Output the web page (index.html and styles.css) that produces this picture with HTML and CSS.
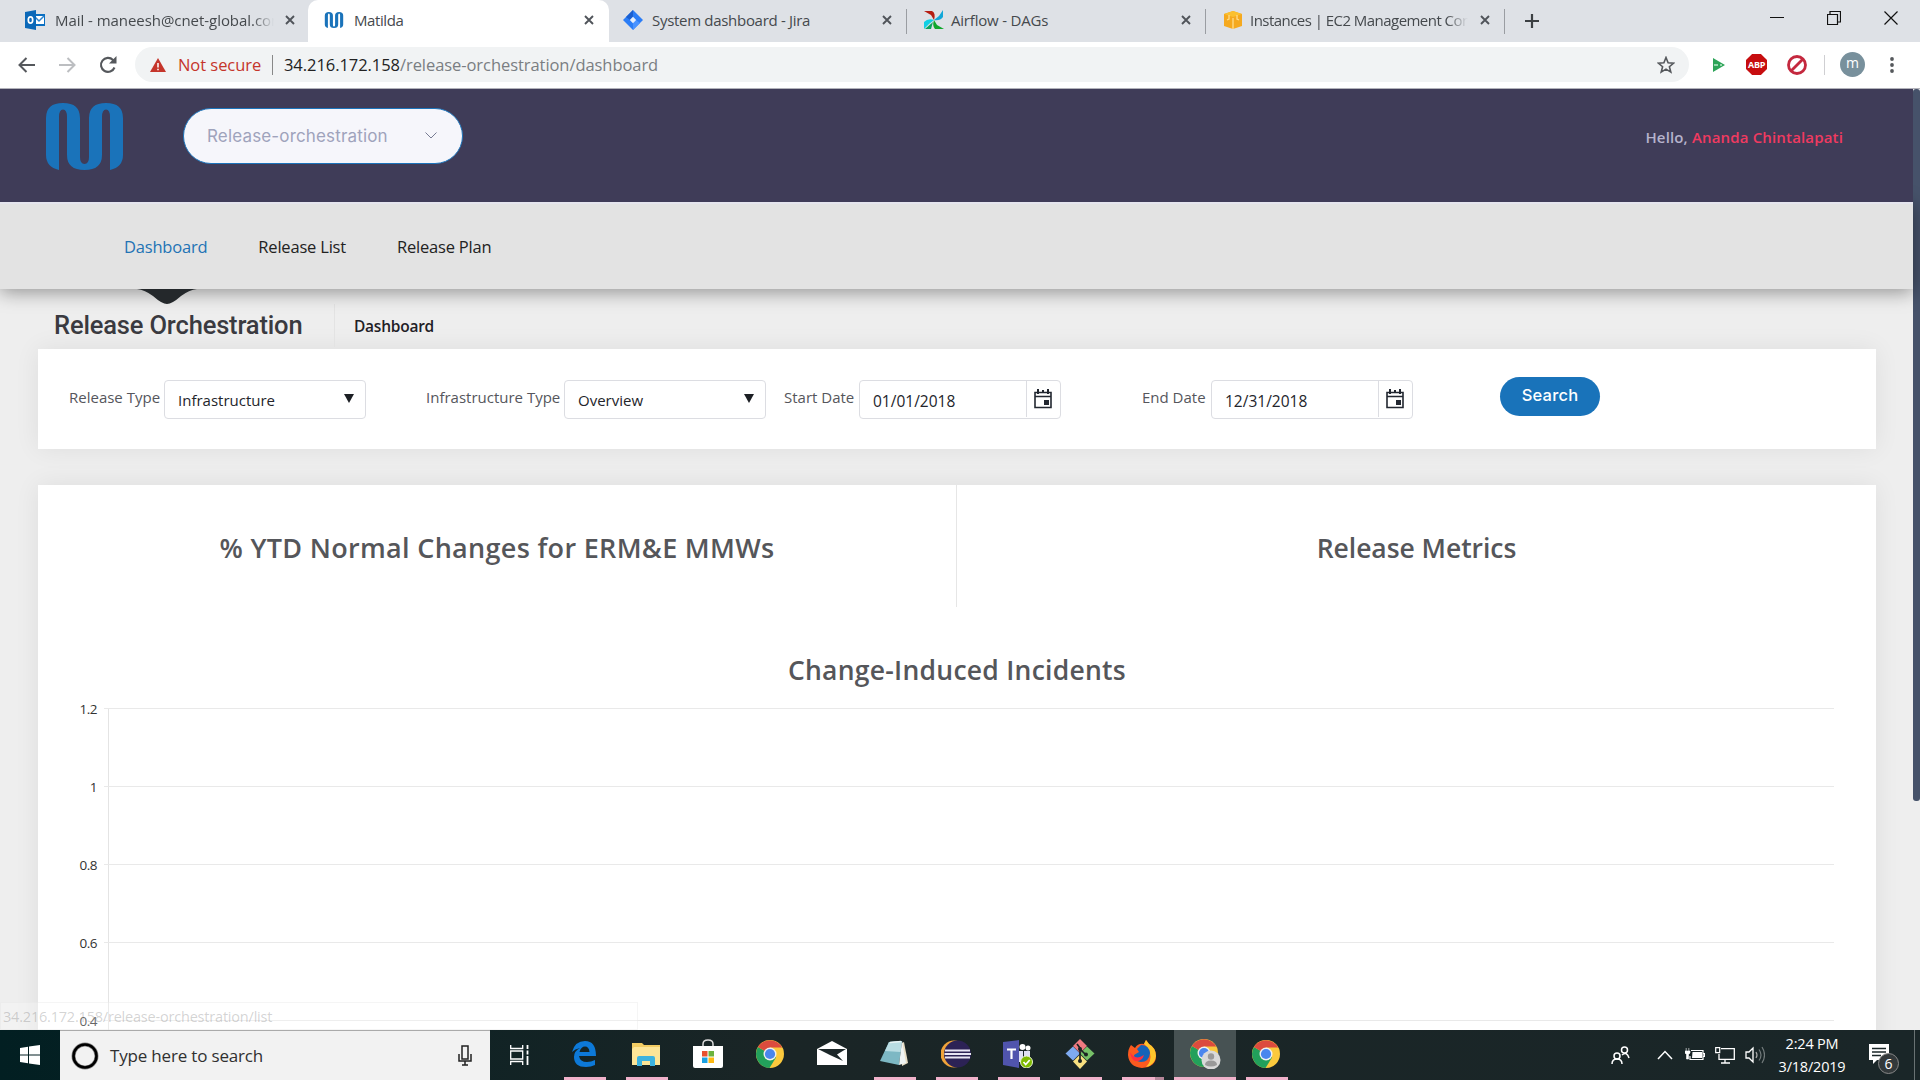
FILE: index.html
```html
<!DOCTYPE html>
<html lang="en">
<head>
<meta charset="utf-8">
<title>Matilda</title>
<link rel="stylesheet" href="styles.css">
</head>
<body>
<svg class="defs" width="0" height="0">
  <symbol id="x" viewBox="0 0 10 10"><path d="M1 1l8 8M9 1l-8 8" stroke="#50545a" stroke-width="1.9" fill="none"/></symbol>
  <symbol id="m-logo" viewBox="0 0 77 67"><path d="M13 67V14Q13 6.500 17 6.500T21 14V52Q21 67 38.500 67T56 52V14Q56 6.500 60 6.500T64 14V67Q77 64 77 52V15Q77 0 60 0T43 15V54Q43 61 38.500 61T34 54V15Q34 0 17 0T0 15V52Q0 64 13 67Z" fill="#1a73ba"/></symbol>
  <symbol id="cal" viewBox="0 0 18 20"><path d="M1 3.500h16v15H1zM1 7.500h16" fill="none" stroke="#222730" stroke-width="1.600"/><path d="M4 0v5M14 0v5M9 3V1" stroke="#222730" stroke-width="2"/><path d="M10 11h5v5h-5z" fill="#222730"/></symbol>
  <symbol id="chrome" viewBox="0 0 28 28"><circle cx="14" cy="14" r="14" fill="#fbc93d"/><path d="M14 14L1.900 7A14 14 0 0 0 13.500 28L20 17.500z" fill="#22a05b"/><path d="M14 14L1.900 7A14 14 0 0 1 26.100 7.500H14z" fill="#dc4b3e"/><circle cx="14" cy="14" r="6.500" fill="#f1f1f1"/><circle cx="14" cy="14" r="5.100" fill="#4a86ee"/></symbol>
</svg>

<header class="tabs">
  <div class="tab first">
    <svg class="fav" width="20" height="20" viewBox="0 0 20 20"><path d="M8 4h12v12H8z" fill="#0a6fc2"/><path d="M10 6h9v8h-9z" fill="#fff"/><path d="M10 7l4 4 5-5" stroke="#2b83cd" fill="none" stroke-width="1.500"/><path d="M0 2l11-2v20L0 18z" fill="#0b68b8"/><ellipse cx="5.500" cy="10" rx="2.200" ry="3.100" fill="none" stroke="#fff" stroke-width="1.700"/></svg>
    <span class="tab-title fade t-mail">Mail - maneesh@cnet-global.com</span>
    <svg class="close" width="10" height="10"><use href="#x"/></svg>
  </div>
  <div class="tab active">
    <svg class="fav" width="18" height="16"><use href="#m-logo"/></svg>
    <span class="tab-title t-matilda">Matilda</span>
    <svg class="close" width="10" height="10"><use href="#x"/></svg>
  </div>
  <div class="tab">
    <svg class="fav" width="20" height="20" viewBox="0 0 20 20"><path d="M10 0l10 10-10 10L0 10z" fill="#2b7df6"/><path d="M10 0v7l-3 3-4-3z" fill="#1a5fd0"/><path d="M10 20v-7l3-3 4 3z" fill="#4a93ff"/><path d="M10 6.800l3.200 3.200-3.200 3.200L6.800 10z" fill="#e6effc"/></svg>
    <span class="tab-title t-jira">System dashboard - Jira</span>
    <svg class="close" width="10" height="10"><use href="#x"/></svg>
  </div>
  <div class="tab">
    <svg class="fav" width="20" height="20" viewBox="0 0 20 20"><path d="M0 1h8q4 2 2 9L7 5z" fill="#b51d12"/><path d="M19 0v7q-3 4-9 3l5-4z" fill="#12a7d8"/><path d="M20 19h-9q-3-3-1-9l3 5z" fill="#10a72c"/><path d="M0 19v-7q4-4 10-2l-5 4z" fill="#10cfe4"/><path d="M1 19l8-7-2 7z" fill="#0ba35c"/></svg>
    <span class="tab-title t-air">Airflow - DAGs</span>
    <svg class="close" width="10" height="10"><use href="#x"/></svg>
  </div>
  <div class="tab">
    <svg class="fav" width="20" height="20" viewBox="0 0 20 20"><path d="M1 4l9-3 9 3v12l-9 3-9-3z" fill="#f5a91f"/><path d="M1 4l9-3 9 3-9 3z" fill="#fbc02f"/><path d="M10 8v11M6 5v4l-2 1M14 5v4l2 1" stroke="#ffdc8a" fill="none" stroke-width="1.300"/></svg>
    <span class="tab-title fade t-ec2">Instances | EC2 Management Console</span>
    <svg class="close" width="10" height="10"><use href="#x"/></svg>
  </div>
  <svg class="plus" width="16" height="16" viewBox="0 0 16 16"><path d="M8 1v14M1 8h14" stroke="#3c4043" stroke-width="2.200"/></svg>
  <div class="window-buttons">
    <svg width="14" height="14" viewBox="0 0 14 14"><path d="M0 6.500h14" stroke="#111"/></svg>
    <svg width="14" height="14" viewBox="0 0 14 14"><path d="M.500 3.500h10v10H.500zM3 3.500v-3h10.500V11H11" fill="none" stroke="#111" stroke-width="1.200"/></svg>
    <svg width="14" height="14" viewBox="0 0 14 14"><path d="M.500.500l13 13M13.500.500l-13 13" stroke="#111" stroke-width="1.200"/></svg>
  </div>
</header>

<div class="toolbar">
  <svg class="nav-ico" width="17" height="16" viewBox="0 0 17 16"><path d="M17 8H2M8.500 1L1.500 8l7 7" fill="none" stroke="#55585c" stroke-width="2"/></svg>
  <svg class="nav-ico" width="17" height="16" viewBox="0 0 17 16"><path d="M0 8h15M8.500 1l7 7-7 7" fill="none" stroke="#bcbec1" stroke-width="2"/></svg>
  <svg class="nav-ico reload" width="18" height="18" viewBox="0 0 18 18"><path d="M15.500 11.500A7 7 0 1 1 14 4l2 2" fill="none" stroke="#55585c" stroke-width="2.100"/><path d="M17.500 0v7.500H10z" fill="#55585c"/></svg>
  <div class="omnibox">
    <svg width="16" height="14" viewBox="0 0 16 14"><path d="M8 0l8 14H0z" fill="#c5352b"/><path d="M8 5v4.500M8 10.700v1.600" stroke="#fff" stroke-width="1.500"/></svg>
    <span class="not-secure">Not secure</span>
    <i class="bar"></i>
    <span class="url"><b>34.216.172.158</b>/release-orchestration/dashboard</span>
    <svg class="star" width="18" height="18" viewBox="0 0 18 18"><path d="M9 1.500l2.100 5.200 5.600.4-4.300 3.600 1.400 5.400L9 13.100l-4.800 3 1.400-5.400L1.300 7.100l5.600-.4z" fill="none" stroke="#55585c" stroke-width="1.600"/></svg>
  </div>
  <div class="extensions">
    <svg width="12" height="14" viewBox="0 0 12 14"><path d="M0 0l12 7-12 7z" fill="#2da458"/><path d="M1 7h4M7 7h2" stroke="#b9e8c9" stroke-width="1.500"/></svg>
    <span class="abp">ABP</span>
    <svg width="20" height="20" viewBox="0 0 20 20"><circle cx="10" cy="10" r="8.500" fill="none" stroke="#c4283e" stroke-width="2.800"/><path d="M4 16L16 4" stroke="#c4283e" stroke-width="2.800"/></svg>
    <i class="ext-bar"></i>
    <span class="avatar">m</span>
    <svg width="4" height="18" viewBox="0 0 4 18"><circle cx="2" cy="3" r="1.900" fill="#55585c"/><circle cx="2" cy="9" r="1.900" fill="#55585c"/><circle cx="2" cy="15" r="1.900" fill="#55585c"/></svg>
  </div>
</div>

<div class="viewport">
  <main class="page">
    <div class="brand-bar">
      <svg class="logo" width="77" height="67"><use href="#m-logo"/></svg>
      <div class="app-select"><span class="app-name">Release-orchestration</span>
        <svg width="12" height="7" viewBox="0 0 12 7"><path d="M.500.500L6 6 11.500.500" fill="none" stroke="#777b92"/></svg>
      </div>
      <p class="greeting">Hello, <b>Ananda Chintalapati</b></p>
    </div>
    <nav class="menu">
      <a class="current">Dashboard<svg class="pointer" width="60" height="15" viewBox="0 0 60 15"><path d="M0 0h60Q52 1 44 7 35 15 30 15T16 7Q8 1 0 0z" fill="#24282b"/></svg></a>
      <a>Release List</a>
      <a>Release Plan</a>
    </nav>
    <div class="heading">
      <h1>Release Orchestration</h1>
      <span class="crumb">Dashboard</span>
    </div>
    <section class="card filters">
      <div class="field f1"><label>Release Type</label><div class="box"><span>Infrastructure</span><i class="caret"></i></div></div>
      <div class="field f2"><label>Infrastructure Type</label><div class="box"><span>Overview</span><i class="caret"></i></div></div>
      <div class="field f3"><label>Start Date</label><div class="box date"><span>01/01/2018</span><span class="cal"><svg width="18" height="20"><use href="#cal"/></svg></span></div></div>
      <div class="field f4"><label>End Date</label><div class="box date"><span>12/31/2018</span><span class="cal"><svg width="18" height="20"><use href="#cal"/></svg></span></div></div>
      <button class="search-btn">Search</button>
    </section>
    <section class="card charts">
      <div class="pair">
        <h2 class="ytd">% YTD Normal Changes for ERM&amp;E MMWs</h2>
        <h2 class="metrics">Release Metrics</h2>
      </div>
      <h2 class="wide">Change-Induced Incidents</h2>
      <div class="plot">
        <div class="row"><span>1.2</span></div>
        <div class="row"><span>1</span></div>
        <div class="row"><span>0.8</span></div>
        <div class="row"><span>0.6</span></div>
        <div class="row"><span>0.4</span></div>
      </div>
    </section>
  </main>
  <div class="scrollbar"><i></i></div>
  <div class="status">34.216.172.158/release-orchestration/list</div>
</div>

<footer class="taskbar">
  <div class="start"><svg width="20" height="20" viewBox="0 0 20 20"><path d="M0 3l8-1.200v7.700H0zM9 1.600L20 0v9.500H9zM0 10.500h8v7.700L0 17zM9 10.500h11V20L9 18.400z" fill="#fff"/></svg></div>
  <div class="search">
    <svg width="28" height="28" viewBox="0 0 28 28"><circle cx="14" cy="14" r="11.500" fill="none" stroke="#888" stroke-width="4"/><circle cx="14" cy="14" r="11.500" fill="none" stroke="#000" stroke-width="2.600"/></svg>
    <span class="hint">Type here to search</span>
    <svg class="mic" width="14" height="21" viewBox="0 0 14 21"><path d="M4 1h6v13H4zM1 9v7h12V9M7 16v4M4 20h6" fill="none" stroke="#222" stroke-width="1.500"/></svg>
  </div>
  <div class="taskview"><svg width="20" height="20" viewBox="0 0 20 20"><path d="M.700 0v3.500h12V0M.700 20v-3.500h12V20M.700 6h12v8H.700z" fill="none" stroke="#fff" stroke-width="1.300"/><path d="M17.500 0v4M17.500 5.500v4M17.500 11v9" stroke="#fff" stroke-width="1.800"/></svg></div>
  <div class="apps">
    <div class="app run"><svg width="26" height="28" viewBox="1 0 26 28"><path d="M2 12Q5 1 15 1q11 0 11 15H9q1 6 8 6 4 0 8-2v5q-4 2-9 2Q4 27 4 17 4 11 10 8q-5 1-8 4zM9.500 12h10Q19 6.500 15 6.500T9.500 12z" fill="#0d79d8" fill-rule="evenodd"/></svg></div>
    <div class="app run"><svg width="28" height="28" viewBox="0 0 28 28"><path d="M0 3h10l2 2h16v20H0z" fill="#f2cc63"/><path d="M2 7h26v18H0V9z" fill="#fde597"/><path d="M5 26v-8q0-2 2-2h14q2 0 2 2v8h-5v-5h-8v5z" fill="#3db3df"/></svg></div>
    <div class="app"><svg width="30" height="30" viewBox="0 0 30 30"><path d="M10 9V5q0-4 5-4t5 4v4" fill="none" stroke="#ddd" stroke-width="1.500"/><path d="M0 7h30v20q0 2-2 2H2q-2 0-2-2z" fill="#fff"/><path d="M9 12h5.500v5.500H9z" fill="#e8502e"/><path d="M15.500 12H21v5.500h-5.500z" fill="#6cb33e"/><path d="M9 18.500h5.500V24H9z" fill="#1ba1e2"/><path d="M15.500 18.500H21V24h-5.500z" fill="#fdb913"/></svg></div>
    <div class="app"><svg width="28" height="28"><use href="#chrome"/></svg></div>
    <div class="app"><svg width="30" height="25" viewBox="0 0 30 25"><path d="M0 8l15-8 15 8v16H0z" fill="#fff"/><path d="M1 8h28l-9 5.500 6 6.500-12-5.500z" fill="#1c2729"/></svg></div>
    <div class="app run"><svg width="28" height="28" viewBox="0 0 28 28"><path d="M22 3l2-1 4 21-6 3z" fill="#e7ddc5"/><path d="M9 2l13-1-3 24L0 21z" fill="#7db8c4"/><path d="M9 2l13-1-1.500 11L5 11z" fill="#b9dde3"/><path d="M22 1l4 22-7 2z" fill="#eef3f3"/><path d="M10 2.500l11-1" stroke="#e9f4f5" stroke-width="1.500"/></svg></div>
    <div class="app run"><svg width="30" height="28" viewBox="0 0 30 28"><circle cx="13" cy="14" r="13.500" fill="#f0a33a"/><circle cx="16.500" cy="14" r="13.500" fill="#2c2255"/><path d="M4 10.500h25M3.500 14H30M4 17.500h25" stroke="#e9e6f4" stroke-width="2"/></svg></div>
    <div class="app run"><svg width="30" height="28" viewBox="0 0 30 28"><path d="M16 11h11v11H16z" fill="#dfe0f3"/><circle cx="19.500" cy="7" r="3" fill="#fff"/><circle cx="25" cy="8" r="2.500" fill="#fff"/><path d="M20.500 11v8" stroke="#1a2628"/><path d="M0 2l16-2v28L0 25z" fill="#5054ad"/><path d="M4 9.500h9M8.500 9.500V19" stroke="#fff" stroke-width="2.200"/><circle cx="23.500" cy="22" r="6" fill="#7fba00" stroke="#e8f3d2"/><path d="M20.500 22l2.200 2.500 4-4.500" stroke="#fff" stroke-width="1.700" fill="none"/></svg></div>
    <div class="app run"><svg width="30" height="30" viewBox="0 0 30 30"><path d="M15 0l7 7-7 7-7-7z" fill="#ef7a80"/><path d="M8 7.500l7 7-7 7-7.500-7z" fill="#7eaaf0"/><path d="M22 7.500l7.500 7-7.500 7-7-7z" fill="#76c068"/><path d="M15 15.500l7 7-7 7.500-7-7.500z" fill="#f8e080"/><path d="M12 5l3 4v13M15 10l6 6" stroke="#1b2223" stroke-width="1.700" fill="none"/><circle cx="15" cy="10" r="2" fill="#1b2223"/><circle cx="15" cy="22" r="2" fill="#1b2223"/><circle cx="21" cy="15.500" r="2" fill="#1b2223"/></svg></div>
    <div class="app run split"><svg width="28" height="28" viewBox="0 0 28 28"><path d="M3 5l4 3q3-5 9-4l2-4 3 4q7 4 7 12 0 11-14 12Q1 27 0 15q0-6 3-10z" fill="#fb5a1f"/><path d="M18 0l3 4q7 4 7 12-1 9-10 11 6-6 4-14-1-5-6-9z" fill="#fec62c"/><path d="M13 5q8 0 9 8-1 9-9 9-7-1-7-7l5-3-2-3z" fill="#1663b8"/><path d="M2 12q4 7 10 5l4-2q-2 7-9 6-4-2-5-9z" fill="#fd3042"/></svg></div>
    <div class="app run focus"><svg width="31" height="30" viewBox="0 0 31 30"><svg width="28" height="28"><use href="#chrome"/></svg><circle cx="21" cy="21" r="9.500" fill="#d9d9d9"/><circle cx="21" cy="17.500" r="3.200" fill="#999"/><path d="M15 26q0-4.500 6-4.500t6 4.500q-6 3-12 0z" fill="#999"/></svg></div>
    <div class="app run"><svg width="28" height="28"><use href="#chrome"/></svg></div>
  </div>
  <div class="tray">
    <svg class="people" width="19" height="19" viewBox="0 0 19 19"><g fill="none" stroke="#fff" stroke-width="1.500"><circle cx="13.500" cy="4" r="3"/><circle cx="6" cy="10" r="3"/><path d="M1 18q0-5 5-5t5 5M11 9q5-4 7 3"/></g></svg>
    <svg class="up" width="16" height="10" viewBox="0 0 16 10"><path d="M1 9l7-7.500L15 9" fill="none" stroke="#fff" stroke-width="1.500"/></svg>
    <svg width="20" height="14" viewBox="0 0 20 14"><path d="M6 2.500h12v9H5V8M18.500 5.500h1v3h-1" fill="none" stroke="#fff" stroke-width="1.200"/><path d="M7.500 4h9.500v6H7z" fill="#fff"/><path d="M0 3h5v2L3.500 6.500V11h-2V6.500L0 5zM1.200 0v3M3.800 0v3" fill="#fff" stroke="#fff" stroke-width=".6"/></svg>
    <svg width="20" height="17" viewBox="0 0 20 17"><path d="M6 1.700h13.300v10.600H4V7M10 12v4M6 16h9" fill="none" stroke="#fff" stroke-width="1.300"/><path d="M.700.700h4v5h-4z" fill="#1a2628" stroke="#fff" stroke-width="1.200"/></svg>
    <svg width="20" height="18" viewBox="0 0 20 18"><path d="M1 6h3l4-4v14l-4-4H1z" fill="none" stroke="#fff" stroke-width="1.300"/><path d="M11 6q2 3 0 6" fill="none" stroke="#aaa" stroke-width="1.200"/><path d="M14 3.500q4 5.500 0 11M17 1q5 8 0 16" fill="none" stroke="#727a7b" stroke-width="1.200"/></svg>
    <div class="clock"><span>2:24 PM</span><span>3/18/2019</span></div>
    <div class="note"><svg width="20" height="20" viewBox="0 0 20 20"><path d="M0 0h20v16H8l-4 4v-4H0z" fill="#fff"/><path d="M3 4.500h14M3 8h14M3 11.500h9" stroke="#1a2628" stroke-width="1.300"/></svg><span class="badge">6</span></div>
    <i class="peek"></i>
  </div>
</footer>
</body>
</html>
```
FILE: styles.css
```css
* { box-sizing: border-box; }
html, body { margin: 0; height: 100%; overflow: hidden; }
body { display: flex; flex-direction: column; width: 1920px; height: 1080px; font-family: "Open Sans", "Noto Sans", sans-serif; background: #eee; }
svg { display: block; flex: none; }
.defs { position: absolute; }
span, label, p, h1, h2, a { white-space: nowrap; }

.tabs { display: flex; height: 42px; background: #dee1e6; flex: none; }
.tab { display: flex; align-items: center; width: 299px; padding: 0 15px 2px 16px; position: relative; font-size: 15px; color: #45494d; border-right: 1px solid transparent; }
.tab .fav { margin-right: 7px; width: 20px; }
.tab .close { margin-left: auto; }
.tab.first { width: 308px; padding-left: 25px; padding-right: 12px; }
.tab.first .fav { margin-right: 10px; }
.tab.active { width: 301px; background: #fff; border-radius: 10px 10px 0 0; padding-right: 14px; }
.tab.active .fav { margin-right: 10px; }
.tab.active + .tab { width: 299px; padding-left: 14px; }
.tab.active + .tab .fav { margin-right: 9px; }
.tab:not(.active):not(.first)::after { content: ""; position: absolute; right: 0; top: 9px; width: 1px; height: 25px; background: #9a9da2; }
.fade { overflow: hidden; -webkit-mask-image: linear-gradient(90deg, #000 90%, transparent); mask-image: linear-gradient(90deg, #000 90%, transparent); }
.t-mail { width: 219px; letter-spacing: -.05px; }
.t-matilda { letter-spacing: -.4px; }
.t-jira { letter-spacing: -.3px; }
.t-air { letter-spacing: -.2px; }
.t-ec2 { width: 218px; letter-spacing: -.54px; }
.plus { margin: 13px 0 0 18px; }
.window-buttons { display: flex; gap: 43px; margin: 11px 22px 0 auto; }

.toolbar { display: flex; align-items: center; height: 47px; padding: 0 26px 1px 18px; background: #fff; border-bottom: 1px solid #b2b2ba; flex: none; }
.nav-ico { margin-right: 24px; }
.reload { margin-left: -1px; }
.omnibox { display: flex; align-items: center; width: 1554px; height: 35px; padding: 0 14px 0 15px; border-radius: 18px; background: #f1f3f4; font-size: 16.500px; margin-left: -6px; }
.not-secure { margin-left: 12px; width: 83px; color: #c5352b; letter-spacing: -.05px; }
.bar { width: 1px; height: 20px; margin: 0 11px 0 11px; background: #888; }
.url { color: #7a7e82; letter-spacing: -.06px; }
.url b { color: #222; font-weight: 400; }
.star { margin-left: auto; }
.extensions { display: flex; align-items: center; margin-left: 24px; flex: 1; }
.abp { display: grid; place-items: center; width: 21px; height: 21px; margin: 0 20px 0 21px; background: #c70d0f; color: #fff; font-size: 9px; font-weight: 700; letter-spacing: -.3px; clip-path: polygon(29% 0, 71% 0, 100% 29%, 100% 71%, 71% 100%, 29% 100%, 0 71%, 0 29%); }
.ext-bar { width: 1px; height: 20px; background: #cfcfd2; margin: 0 15px 0 17px; }
.avatar { display: grid; place-items: center; width: 25px; height: 25px; border-radius: 50%; background: #78909c; color: #fff; font-size: 14px; line-height: 20px; padding-bottom: 3px; }
.avatar + svg { margin-left: auto; }

.viewport { position: relative; display: flex; height: 941px; overflow: hidden; flex: none; }
.page { width: 1913px; background: #eee; }
.brand-bar { display: flex; position: relative; z-index: 2; height: 113px; padding-left: 46px; background: #3f3c58; }
.logo { margin-top: 14px; }
.app-select { display: flex; align-items: center; justify-content: space-between; width: 280px; height: 56px; margin: 19px 0 0 60px; padding: 0 25px 1px 23px; border: 1px solid #1c74bb; border-radius: 28px; background: #f6f6fb; color: #9fa3bc; font-family: Inter, sans-serif; font-size: 17px; }
.app-name { letter-spacing: .16px; }
.greeting { margin: 36px 70px 0 auto; font-size: 15px; line-height: 24px; font-weight: 600; letter-spacing: .16px; color: #b6b3cc; }
.greeting b { font-weight: 600; color: #f03a60; }

.menu { display: flex; gap: 51px; position: relative; z-index: 1; height: 87px; padding-left: 124px; border-top: 2px solid #e5e5ee; background: #e3e3e3; box-shadow: 0 3px 18px rgba(0, 0, 0, .4); font-size: 16.500px; letter-spacing: -.2px; color: #222; }
.menu a { display: flex; align-items: center; position: relative; }
.menu .current { color: #2273b5; }
.pointer { position: absolute; left: 13px; top: 85px; }

.heading { display: flex; height: 60px; padding-left: 54px; }
.heading h1 { margin: 15px 0 2px; width: 281px; border-right: 1px solid #e3e3e3; font: 500 25.500px/43px Roboto, sans-serif; letter-spacing: -.16px; color: #3a3a40; }
.crumb { margin: 25px 0 0 19px; font-size: 15.500px; line-height: 24px; font-weight: 600; letter-spacing: -.24px; color: #1f2026; }

.card { width: 1838px; margin-left: 38px; background: #fff; box-shadow: 0 0 24px rgba(0, 0, 0, .07); }
.filters { display: flex; height: 100px; padding: 31px 0 0 31px; }
.field { display: flex; font-size: 15px; color: #55565c; }
.field label { line-height: 34px; }
.box { display: flex; align-items: center; width: 202px; height: 39px; padding: 1px 11px 0 13px; border: 1px solid #dcdde2; border-radius: 4px; color: #24252b; font-size: 15px; }
.caret { margin: -3px 0 0 auto; border: 5px solid transparent; border-top: 9px solid #1c1f24; border-bottom: 0; }
.date { padding: 2px 0 0 13px; font-size: 15.500px; }
.cal { display: grid; place-items: center; width: 34px; height: 36px; margin: -4px 0 0 auto; padding-right: 1px; border-left: 1px solid #dcdde2; }
.f1 label { width: 95px; }
.f2 { margin-left: 60px; } .f2 label { width: 138px; }
.f3 { margin-left: 18px; } .f3 label { width: 75px; }
.f4 { margin-left: 81px; } .f4 label { width: 69px; }
.search-btn { display: grid; place-items: center; width: 100px; height: 39px; margin: -3px 0 0 87px; padding: 0 0 3px; border: 0; border-radius: 20px; background: #1973ba; color: #fff; font: 500 16.500px Inter, sans-serif; letter-spacing: .2px; }

.charts { height: 600px; margin-top: 36px; }
.charts h2 { margin: 0; font-size: 26.500px; font-weight: 600; line-height: 36px; text-align: center; color: #55565a; }
.pair { display: grid; grid-template-columns: 919px 1fr; height: 122px; }
.pair h2 { padding-top: 45px; }
.pair .ytd { border-right: 1px solid #e6e6e6; font-size: 27px; letter-spacing: .32px; }
.pair .metrics { letter-spacing: -.05px; }
.charts .wide { margin-top: 45px; letter-spacing: .26px; }
.plot { width: 1730px; margin: 20px 0 0 66px; background: linear-gradient(#e4e4e4, #e4e4e4) 4px 0 / 1px 100% no-repeat; }
.row { height: 78px; border-top: 1px solid #e9e9e9; }
.row span { display: block; width: 40px; margin: -9px 0 0 -47px; font-size: 13.500px; line-height: 18px; letter-spacing: -.5px; text-align: right; color: #333; }

.scrollbar { width: 7px; background: #eee; }
.scrollbar i { display: block; height: 712px; border-radius: 3px; background: #46526a; }
.status { position: absolute; left: 0; bottom: 0; width: 638px; height: 28px; padding-left: 2px; border: 1px solid rgba(225, 225, 225, .35); background: rgba(255, 255, 255, .25); font-size: 14.500px; line-height: 27px; letter-spacing: -.2px; color: rgba(120, 120, 120, .32); white-space: nowrap; }

.taskbar { display: flex; height: 50px; background: linear-gradient(90deg, #021f22, #1a2526 40%, #1a2628); flex: none; }
.start { display: grid; place-items: center; width: 60px; }
.search { display: flex; align-items: center; width: 430px; padding: 0 18px 0 11px; border-top: 1px solid #aaa; background: #f2f2f2; font-size: 17px; letter-spacing: -.18px; color: #303030; }
.search .hint { margin-left: 11px; }
.mic { margin-left: auto; }
.taskview { display: grid; place-items: center; width: 60px; }
.apps { display: flex; margin-left: 4px; }
.app { display: grid; place-items: center; width: 62px; padding-right: 3px; border: solid transparent; border-width: 0 5px 3px 6px; }
.run { border-image: linear-gradient(90deg, transparent 5px, #f0b2cb 5px, #f0b2cb 56px, transparent 56px) 0 0 3; border-bottom: 3px solid #f0b2cb; }
.split { border-image: linear-gradient(90deg, transparent 5px, #f0b2cb 5px, #f0b2cb 45px, #b5879a 45px, #b5879a 56px, transparent 56px) 0 0 3; }
.focus { background: #475253; border-image: none; border-width: 0 0 3px; border-color: #f0b2cb; padding: 0; }
.tray { display: flex; align-items: center; margin-left: auto; width: 309px; }
.tray > svg { margin-right: 10px; }
.tray .people { margin-right: 27px; }
.tray .up { margin-right: 12px; }
.clock { width: 88px; margin-left: -7px; display: grid; justify-items: center; font-size: 14.500px; line-height: 23px; letter-spacing: -.2px; color: #fff; }
.note { position: relative; margin: -3px 0 0 13px; }
.badge { position: absolute; left: 9px; top: 9px; width: 21px; height: 21px; border: 1px solid #888; border-radius: 50%; background: #33393b; color: #fff; font-size: 14px; line-height: 19px; text-align: center; }
.peek { width: 1px; height: 50px; margin: 0 5px 0 auto; background: #697273; }
```
